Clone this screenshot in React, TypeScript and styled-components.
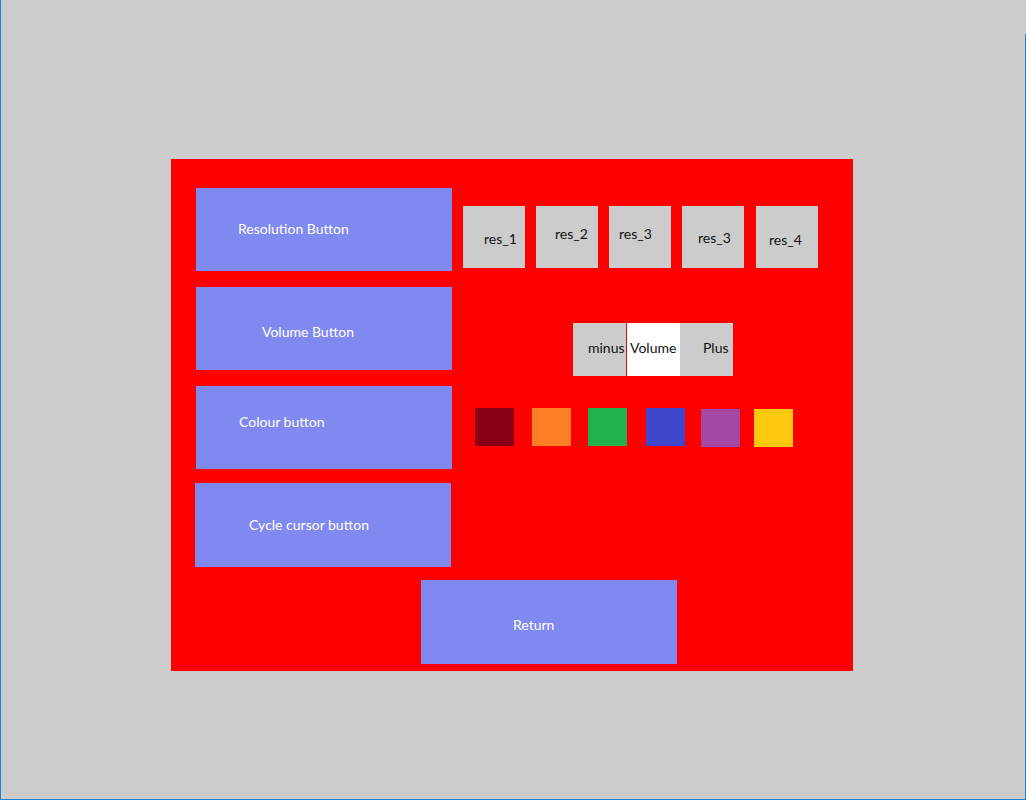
import styled, { createGlobalStyle } from "styled-components";

const GlobalStyle = createGlobalStyle`
  body {
    margin: 0;
    background: #cccccc;
    font-family: Lato, "Liberation Sans", sans-serif;
  }
`;

const Window = styled.div`
  position: relative;
  box-sizing: border-box;
  width: 1026px;
  height: 800px;
  background: #cccccc;
  border-left: 1px solid #1e82d2;
  border-bottom: 1px solid #1e82d2;
  padding: 159px 0 0 170px;

  /* window frame edge on the right starts lower down */
  &::after {
    content: "";
    position: absolute;
    right: 0;
    top: 34px;
    bottom: -1px;
    width: 1px;
    background: #1e82d2;
  }
`;

const Panel = styled.div`
  box-sizing: border-box;
  width: 682px;
  height: 512px;
  background: #ff0000;
  padding: 29px 0 0 25px;
  display: flex;
  flex-direction: column;
`;

const Row = styled.div<{ $mt?: number; $h?: number }>`
  display: flex;
  align-items: flex-start;
  height: ${(p) => p.$h ?? 83}px;
  margin-top: ${(p) => p.$mt ?? 0}px;
`;

const MenuButton = styled.div<{ $ml?: number; $h?: number; $padL: number; $padT: number }>`
  box-sizing: border-box;
  flex: none;
  width: 256px;
  height: ${(p) => p.$h ?? 83}px;
  margin-left: ${(p) => p.$ml ?? 0}px;
  padding: ${(p) => p.$padT}px 0 0 ${(p) => p.$padL}px;
  background: #7f89f0;
  color: #ffffff;
  font-size: 14px;
  line-height: 16px;
  white-space: nowrap;
`;

const ResList = styled.div`
  display: flex;
  margin: 18px 0 0 11px;
`;

const ResButton = styled.div<{ $ml: number; $padL: number; $padT: number }>`
  box-sizing: border-box;
  width: 62px;
  height: 62px;
  margin-left: ${(p) => p.$ml}px;
  padding: ${(p) => p.$padT}px 0 0 ${(p) => p.$padL}px;
  background: #cccccc;
  color: #111111;
  font-size: 14px;
  line-height: 16px;
  white-space: nowrap;
`;

const VolumeGroup = styled.div`
  display: flex;
  margin: 36px 0 0 121px;
`;

const VolumePart = styled.div<{ $padL: number; $light?: boolean }>`
  box-sizing: border-box;
  width: ${(p) => (p.$light ? 54 : 53)}px;
  height: 53px;
  padding: 17px 0 0 ${(p) => p.$padL}px;
  background: ${(p) => (p.$light ? "#ffffff" : "#cccccc")};
  border-left: ${(p) => (p.$light ? "1px solid #ff0000" : "none")};
  color: #111111;
  font-size: 14px;
  line-height: 16px;
  white-space: nowrap;
  overflow: hidden;
`;

const Swatches = styled.div`
  display: flex;
  align-items: flex-start;
  margin: 22px 0 0 23px;
`;

const Swatch = styled.div<{ $color: string; $ml: number; $mt: number }>`
  width: 39px;
  height: 38px;
  margin: ${(p) => p.$mt}px 0 0 ${(p) => p.$ml}px;
  background: ${(p) => p.$color};
`;

const resButtons = [
  { label: "res_1", ml: 0, padL: 21, padT: 25 },
  { label: "res_2", ml: 11, padL: 19, padT: 20 },
  { label: "res_3", ml: 11, padL: 10, padT: 20 },
  { label: "res_3", ml: 11, padL: 16, padT: 24 },
  { label: "res_4", ml: 12, padL: 13, padT: 26 },
];

const colours = [
  { color: "#880015", ml: 0, mt: 0 },
  { color: "#ff7f27", ml: 18, mt: 0 },
  { color: "#22b14c", ml: 17, mt: 0 },
  { color: "#3f48cc", ml: 19, mt: 0 },
  { color: "#a349a4", ml: 16, mt: 1 },
  { color: "#ffc90e", ml: 14, mt: 1 },
];

export default function App() {
  return (
    <>
      <GlobalStyle />
      <Window>
        <Panel>
          <Row>
            <MenuButton $padL={42} $padT={33}>
              Resolution Button
            </MenuButton>
            <ResList>
              {resButtons.map((r, i) => (
                <ResButton key={i} $ml={r.ml} $padL={r.padL} $padT={r.padT}>
                  {r.label}
                </ResButton>
              ))}
            </ResList>
          </Row>
          <Row $mt={16}>
            <MenuButton $padL={66} $padT={37}>
              Volume Button
            </MenuButton>
            <VolumeGroup>
              <VolumePart $padL={15}>minus</VolumePart>
              <VolumePart $padL={3} $light>
                Volume
              </VolumePart>
              <VolumePart $padL={23}>Plus</VolumePart>
            </VolumeGroup>
          </Row>
          <Row $mt={16}>
            <MenuButton $padL={43} $padT={28}>
              Colour button
            </MenuButton>
            <Swatches>
              {colours.map((c) => (
                <Swatch key={c.color} $color={c.color} $ml={c.ml} $mt={c.mt} />
              ))}
            </Swatches>
          </Row>
          <Row $mt={14} $h={84}>
            <MenuButton $ml={-1} $h={84} $padL={54} $padT={34}>
              Cycle cursor button
            </MenuButton>
          </Row>
          <Row $mt={13} $h={84}>
            <MenuButton $ml={225} $h={84} $padL={92} $padT={37}>
              Return
            </MenuButton>
          </Row>
        </Panel>
      </Window>
    </>
  );
}
